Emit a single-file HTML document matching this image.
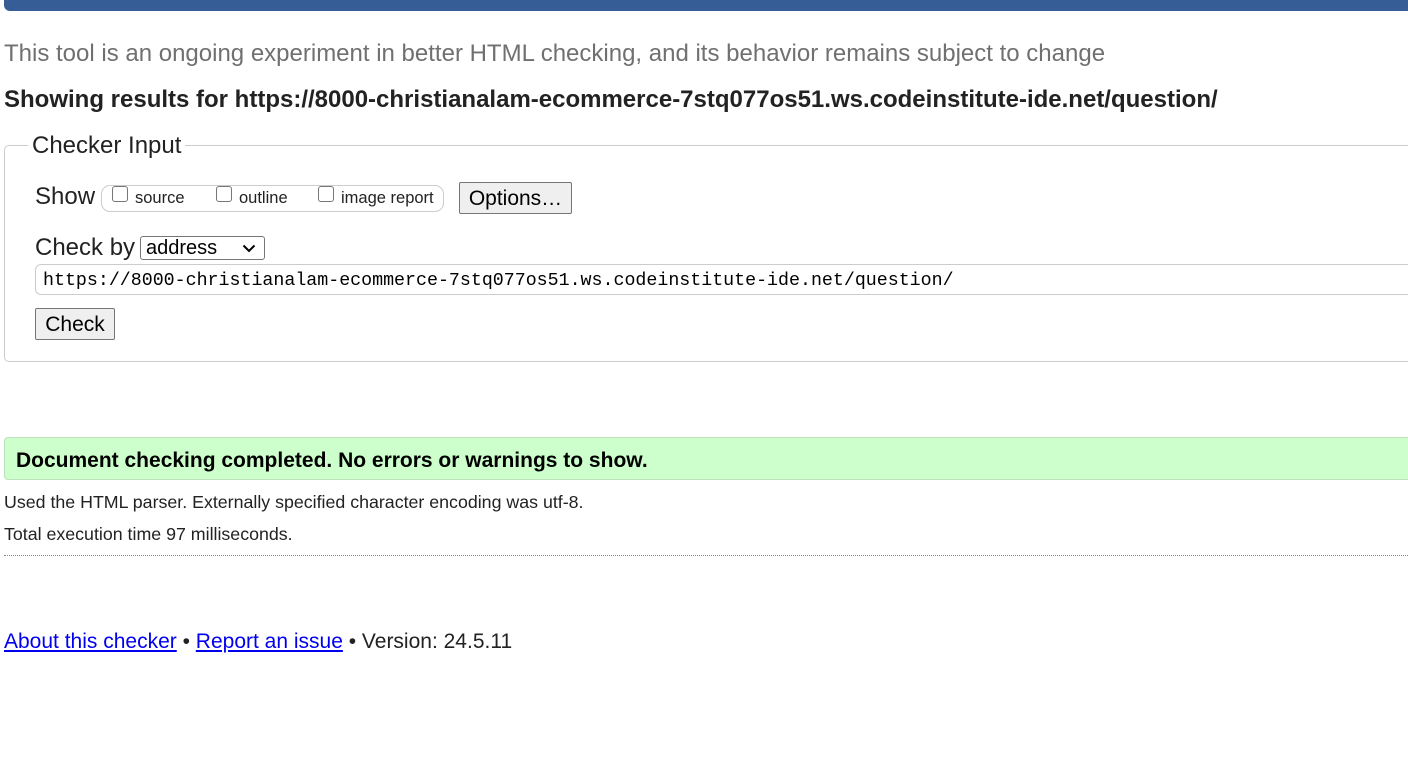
<!DOCTYPE html>
<html><head><meta charset="utf-8"><style>
body{margin:0;width:1408px;height:766px;overflow:hidden;background:#fff;font-family:"Liberation Sans",Arial,sans-serif;color:#222;position:relative}
.a{position:absolute;white-space:nowrap}
.bar{left:4px;top:0;width:1420px;height:11px;background:#365d95;border-bottom-left-radius:6px}
.btn{position:absolute;background:#efefef;border:1px solid #767676;border-radius:2px;font-size:21px;color:#000;display:flex;align-items:center;justify-content:center;box-sizing:border-box;padding-top:2px}
.cb{position:absolute;width:16px;height:16px;border:1px solid #767676;border-radius:3px;box-sizing:border-box;background:#fff}
</style></head><body>
<div class="a bar"></div>
<div class="a" style="left:4px;top:40px;font-size:24px;color:#707070">This tool is an ongoing experiment in better HTML checking, and its behavior remains subject to change</div>
<div class="a" style="left:4px;top:86px;font-size:24px;font-weight:bold;color:#222">Showing results for https://8000-christianalam-ecommerce-7stq077os51.ws.codeinstitute-ide.net/question/</div>
<div class="a" style="left:4px;top:145px;width:1420px;height:215px;border:1px solid #ccc;border-radius:5px"></div>
<div class="a" style="left:28px;top:132px;font-size:24px;background:#fff;padding:0 4px;color:#222">Checker Input</div>
<div class="a" style="left:35px;top:183px;font-size:24px">Show</div>
<div class="a" style="left:101px;top:185px;width:341px;height:25px;border:1px solid #ccc;border-radius:9px"></div>
<div class="cb" style="left:112px;top:186px"></div><div class="a" style="left:135px;top:189px;font-size:16.5px">source</div>
<div class="cb" style="left:216px;top:186px"></div><div class="a" style="left:239px;top:189px;font-size:16.5px">outline</div>
<div class="cb" style="left:318px;top:186px"></div><div class="a" style="left:341px;top:189px;font-size:16.5px">image report</div>
<div class="btn" style="left:459px;top:182px;width:113px;height:32px">Options…</div>
<div class="a" style="left:35px;top:234px;font-size:24px">Check by</div>
<div class="a" style="left:140px;top:236px;width:125px;height:24px;border:1px solid #767676;border-radius:3px;font-size:20px;color:#000;box-sizing:border-box;padding-left:5px;line-height:23px">address<svg style="position:absolute;right:8px;top:7px" width="14" height="9" viewBox="0 0 14 9"><path d="M1.5 1.5L7 7L12.5 1.5" fill="none" stroke="#000" stroke-width="2"/></svg></div>
<div class="a" style="left:35px;top:264px;width:1400px;height:31px;border:1px solid #ccc;border-radius:6px;box-sizing:border-box;font-family:'Liberation Mono','DejaVu Sans Mono',monospace;font-size:18.3px;line-height:33px;padding-left:7px;color:#000">https://8000-christianalam-ecommerce-7stq077os51.ws.codeinstitute-ide.net/question/</div>
<div class="btn" style="left:35px;top:308px;width:80px;height:32px">Check</div>
<div class="a" style="left:4px;top:437px;width:1420px;height:43px;background:#ccffcc;border:1px solid #bde0bd;border-radius:4px;box-sizing:border-box"></div>
<div class="a" style="left:16px;top:449px;font-size:21px;font-weight:bold;color:#000">Document checking completed. No errors or warnings to show.</div>
<div class="a" style="left:4px;top:492px;font-size:17.8px">Used the HTML parser. Externally specified character encoding was utf-8.</div>
<div class="a" style="left:4px;top:524px;font-size:17.8px">Total execution time 97 milliseconds.</div>
<div class="a" style="left:4px;top:555px;width:1410px;border-top:1px dotted #888"></div>
<div class="a" style="left:4px;top:630px;font-size:21px"><span style="color:#00e;text-decoration:underline">About this checker</span> • <span style="color:#00e;text-decoration:underline">Report an issue</span> • Version: 24.5.11</div>
</body></html>
